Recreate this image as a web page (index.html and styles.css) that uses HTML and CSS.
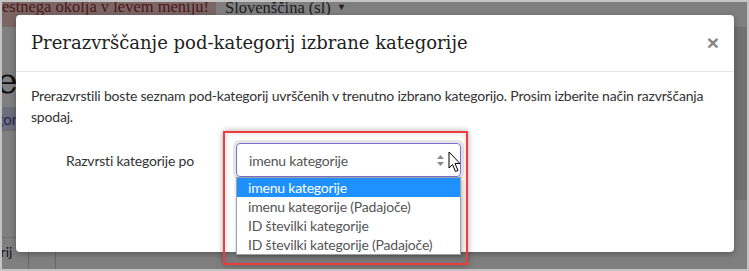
FILE: index.html
```
<!DOCTYPE html>
<html lang="sl">
<head>
    <meta charset="UTF-8">
    <title>Prerazvrščanje pod-kategorij</title>
    <link rel="stylesheet" href="styles.css">
</head>
<body>
    <div class="screen">
        <!-- stran v ozadju -->
        <div class="page">
            <div class="topbar">
                <div class="env-alert"><span>Delate v okviru testnega okolja v levem meniju!</span></div>
                <div class="lang">Slovenščina (sl) <span class="caret">&#9660;</span></div>
            </div>
            <div class="page-body">
                <div class="page-main">
                    <h1 class="page-title">Prerazvrstitev kategorij</h1>
                    <div class="crumbs"><span>Kategorije</span></div>
                    <div class="spacer"></div>
                    <div class="table-row">
                        <div class="cell"><span>Kategorij</span></div>
                        <div class="cell"></div>
                    </div>
                </div>
                <div class="page-side"></div>
            </div>
        </div>

        <div class="backdrop"></div>

        <!-- modalno okno -->
        <div class="modal">
            <div class="modal-header">
                <h4 class="modal-title">Prerazvrščanje pod-kategorij izbrane kategorije</h4>
                <span class="close">&times;</span>
            </div>
            <div class="modal-body">
                <p>Prerazvrstili boste seznam pod-kategorij uvrščenih v trenutno izbrano kategorijo. Prosim izberite način razvrščanja spodaj.</p>
                <div class="form-row">
                    <label class="form-label">Razvrsti kategorije po</label>
                    <div class="select">
                        <span>imenu kategorije</span>
                        <svg class="select-arrows" width="7" height="11" viewBox="0 0 7 11">
                            <path d="M3.5 0 L7 4 L0 4 Z" fill="#8a8a8a"/>
                            <path d="M0 7 L7 7 L3.5 11 Z" fill="#8a8a8a"/>
                        </svg>
                        <ul class="select-list">
                            <li class="selected">imenu kategorije</li>
                            <li>imenu kategorije (Padajoče)</li>
                            <li>ID številki kategorije</li>
                            <li>ID številki kategorije (Padajoče)</li>
                        </ul>
                    </div>
                </div>
            </div>
        </div>

        <div class="callout"></div>

        <svg class="pointer" width="14" height="22" viewBox="0 0 14 22">
            <path d="M1 1 L1 17 L4.5 13.5 L7.5 20.5 L10 19.5 L7 12.5 L12 12.5 Z" fill="#fff" stroke="#000" stroke-width="1" stroke-linejoin="round"/>
        </svg>
    </div>
</body>
</html>
```

FILE: styles.css
```
* {
    box-sizing: border-box;
}

body {
    margin: 0;
    padding: 2px;
    background: #c4c4c4;
    font-family: Lato, "Liberation Sans", sans-serif;
}

.screen {
    position: relative;
    width: 745px;
    height: 267px;
    overflow: hidden;
    background: #fff;
}

/* stran v ozadju */
.page {
    height: 100%;
    display: flex;
    flex-direction: column;
}

.topbar {
    display: flex;
    height: 25px;
    font-family: "Liberation Serif", serif;
    font-size: 16.5px;
    line-height: 16px;
    white-space: nowrap;
}

.env-alert {
    width: 214px;
    padding-right: 7px;
    background: #f6cccc;
    color: #9c3030;
    overflow: hidden;
    display: flex;
    justify-content: flex-end;
}

.env-alert span {
    margin-top: -3px;
}

.lang {
    padding-left: 9px;
    margin-top: -3px;
    color: #404040;
}

.caret {
    font-size: 9px;
    vertical-align: 3px;
    margin-left: 2px;
}

.page-body {
    flex: 1;
    display: flex;
}

.page-main {
    flex: 1;
    display: flex;
    flex-direction: column;
}

.page-title {
    margin: 34px 0 0;
    font-family: "DejaVu Serif", serif;
    font-weight: normal;
    font-size: 36px;
    line-height: 40px;
    color: #222;
    white-space: nowrap;
    text-indent: -47px;
}

.crumbs {
    margin-top: 6px;
    height: 24px;
    background: #dcdcf6;
    color: #5050a8;
    font-size: 15px;
    line-height: 24px;
    white-space: nowrap;
    text-indent: -37px;
}

.spacer {
    flex: 1;
}

.table-row {
    display: flex;
    height: 32px;
    border-top: 1px solid #ddd;
}

.table-row .cell {
    width: 27px;
    padding-top: 5px;
    font-size: 14px;
    color: #333;
    white-space: nowrap;
    overflow: hidden;
    border-right: 1px solid #ccc;
}

.table-row .cell span {
    margin-left: -45px;
}

.page-side {
    width: 14px;
    height: 173px;
    background: #e2e2e2;
}

.backdrop {
    position: absolute;
    inset: 0;
    background: rgba(0, 0, 0, 0.5);
}

/* modalno okno */
.modal {
    position: absolute;
    left: 14px;
    top: 13px;
    width: 718px;
    height: 237px;
    background: #fff;
    border-radius: 4px;
    box-shadow: 0 2px 6px rgba(0, 0, 0, 0.3);
}

.modal-header {
    display: flex;
    justify-content: space-between;
    align-items: center;
    padding: 15px;
    border-bottom: 1px solid #e5e5e5;
}

.modal-title {
    margin: 0;
    font-family: "DejaVu Serif", serif;
    font-weight: normal;
    font-size: 18px;
    line-height: 26px;
    color: #222;
}

.close {
    font-family: "Liberation Sans", sans-serif;
    font-size: 21px;
    font-weight: bold;
    line-height: 20px;
    color: #858585;
}

.modal-body {
    padding: 13px 15px 15px;
    font-size: 14px;
    line-height: 21px;
    letter-spacing: -0.2px;
    color: #333;
}

.modal-body p {
    margin: 0 0 16px;
}

.form-row {
    display: flex;
    align-items: center;
    padding-left: 35px;
}

.form-label {
    width: 170px;
    color: #333;
}

.select {
    position: relative;
    width: 225px;
    height: 34px;
    padding: 0 12px;
    display: flex;
    align-items: center;
    justify-content: space-between;
    border: 1px solid #7c6fd4;
    border-radius: 4px;
    color: #555;
    box-shadow: 0 0 0 3px rgba(0, 0, 0, 0.1);
}

.select-arrows {
    margin-right: 4px;
}

.select-list {
    position: absolute;
    left: -1px;
    top: 33px;
    width: 225px;
    margin: 0;
    padding: 0;
    list-style: none;
    background: #fff;
    border: 1px solid #a0a0a0;
    box-shadow: 1px 2px 4px rgba(0, 0, 0, 0.3);
}

.select-list li {
    height: 19px;
    line-height: 19px;
    padding-left: 11px;
    color: #555;
    white-space: nowrap;
}

.select-list li.selected {
    background: #1e90ff;
    color: #fff;
}

/* oznaka na posnetku */
.callout {
    position: absolute;
    left: 221px;
    top: 129px;
    width: 245px;
    height: 134px;
    border: 2px solid #f03c3c;
    box-shadow: 0 0 6px rgba(0, 0, 0, 0.35), inset 0 0 6px rgba(0, 0, 0, 0.15);
}

.pointer {
    position: absolute;
    left: 446px;
    top: 149px;
}
```
